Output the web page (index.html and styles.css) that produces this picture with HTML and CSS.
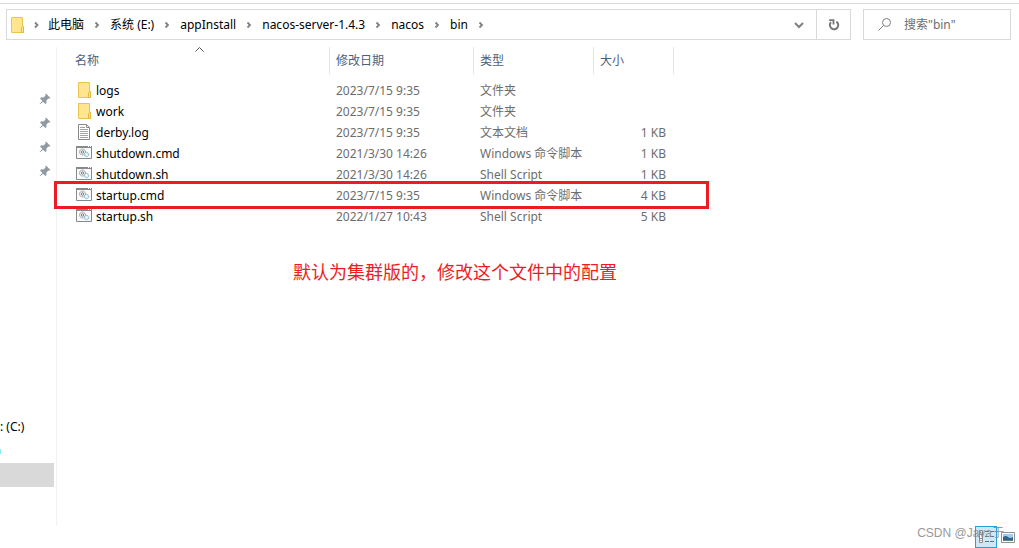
FILE: index.html
```html
<!DOCTYPE html>
<html lang="zh-CN">
<head>
<meta charset="utf-8">
<title>bin</title>
<link rel="stylesheet" href="styles.css">
</head>
<body>
<svg class="defs" aria-hidden="true">
  <symbol id="chevron" viewBox="0 0 8 8"><path d="M2.500 1.500 5 4 2.500 6.500" fill="none" stroke="#808080" stroke-width="1.800"/></symbol>
  <symbol id="folder" viewBox="0 0 16 16">
    <path d="M2.500.5h11v9h1v6h-12z" fill="#ffe590" stroke="#eac54f"/>
    <path d="M12.500 15.500v-5l1-1h1v6z" fill="#ffe590" stroke="#e3b93c"/>
  </symbol>
  <symbol id="text-file" viewBox="0 0 16 16">
    <path d="M2.500.5h8l3 3v12h-11z" fill="#fff" stroke="#8a8a8a"/>
    <path d="M10.500.5v3h3" fill="none" stroke="#8a8a8a"/>
    <path d="M4 3.500h5M4 5.500h8M4 7.500h8M4 9.500h8M4 11.500h8M4 13.500h8" stroke="#a0a4a6"/>
  </symbol>
  <symbol id="script" viewBox="0 0 16 16">
    <path d="M.5 1.500h15v12H.5z" fill="#fafafa" stroke="#858a8d"/>
    <path d="M0 2h16" stroke="#858a8d" stroke-width="2"/>
    <path d="M12 1.500h1M14 1.500h1" stroke="#fff"/>
    <circle cx="6.500" cy="7" r="3" fill="#f0f0f0" stroke="#8d9295" stroke-dasharray="1.500 .6"/>
    <circle cx="6.500" cy="7" r="1.200" fill="#fff" stroke="#777"/>
    <circle cx="10.500" cy="9.500" r="2.200" fill="#d8eefb" stroke="#7fb1cf" stroke-dasharray="1.500 .5"/>
    <circle cx="10.500" cy="9.500" r=".7" fill="#fff"/>
  </symbol>
  <symbol id="pin" viewBox="0 0 12 12">
    <path d="M7 .6 11.400 5l-1.100.8-1-.2-1.900 2 .1 2.300-1.200 1.200L4 8.700.9 11.300.5 10.900l2.900-3.200L1 5.500l1.200-1.200 2.400.1 2-2-.4-1z" fill="#8e9aa3"/>
  </symbol>
</svg>

<header class="toolbar">
  <nav class="address" aria-label="路径">
    <svg class="icon"><use href="#folder"/></svg>
    <ol class="crumbs">
      <li><svg class="sep"><use href="#chevron"/></svg>此电脑</li>
      <li><svg class="sep"><use href="#chevron"/></svg>系统 (E:)</li>
      <li><svg class="sep"><use href="#chevron"/></svg>appInstall</li>
      <li><svg class="sep"><use href="#chevron"/></svg>nacos-server-1.4.3</li>
      <li><svg class="sep"><use href="#chevron"/></svg>nacos</li>
      <li><svg class="sep"><use href="#chevron"/></svg>bin<svg class="sep"><use href="#chevron"/></svg></li>
    </ol>
    <button class="history" type="button" aria-label="以前的位置"><svg width="10" height="8" viewBox="0 0 10 8"><path d="m1 2 4 4 4-4" fill="none" stroke="#808080" stroke-width="2"/></svg></button>
    <button class="refresh" type="button" aria-label="刷新"><svg width="12" height="12" viewBox="0 0 12 12"><path d="M8.400 2.600A4.200 4.200 0 1 1 3 3.200" fill="none" stroke="#777" stroke-width="2"/><path d="M1.200 1.200h4.300v4.300" fill="none" stroke="#777" stroke-width="1.800"/></svg></button>
  </nav>
  <label class="search">
    <svg width="14" height="14" viewBox="0 0 14 14"><circle cx="8.500" cy="4.500" r="4" fill="none" stroke="#7d7d7d"/><path d="M5.500 7.500.5 12.500" stroke="#7d7d7d"/></svg>
    <input type="text" placeholder='搜索"bin"' aria-label="搜索">
  </label>
</header>

<div class="body">
  <aside class="sidebar">
    <ul class="pins">
      <li><svg><use href="#pin"/></svg></li>
      <li><svg><use href="#pin"/></svg></li>
      <li><svg><use href="#pin"/></svg></li>
      <li><svg><use href="#pin"/></svg></li>
    </ul>
    <ul class="drives">
      <li>: (C:)</li>
      <li class="network"></li>
      <li class="selected"></li>
    </ul>
  </aside>
  <main class="content">
    <table class="files">
      <colgroup><col class="col-name"><col class="col-date"><col class="col-type"><col class="col-size"></colgroup>
      <thead>
        <tr>
          <th class="sorted">名称<svg class="sort" width="9" height="5" viewBox="0 0 9 5"><path d="m.5 4.500 4-4 4 4" fill="none" stroke="#555"/></svg></th>
          <th>修改日期</th><th>类型</th><th>大小</th>
        </tr>
      </thead>
      <tbody>
        <tr><td><span class="name"><svg class="icon"><use href="#folder"/></svg>logs</span></td><td>2023/7/15 9:35</td><td>文件夹</td><td></td></tr>
        <tr><td><span class="name"><svg class="icon"><use href="#folder"/></svg>work</span></td><td>2023/7/15 9:35</td><td>文件夹</td><td></td></tr>
        <tr><td><span class="name"><svg class="icon"><use href="#text-file"/></svg>derby.log</span></td><td>2023/7/15 9:35</td><td>文本文档</td><td>1 KB</td></tr>
        <tr><td><span class="name"><svg class="icon"><use href="#script"/></svg>shutdown.cmd</span></td><td>2021/3/30 14:26</td><td>Windows 命令脚本</td><td>1 KB</td></tr>
        <tr><td><span class="name"><svg class="icon"><use href="#script"/></svg>shutdown.sh</span></td><td>2021/3/30 14:26</td><td>Shell Script</td><td>1 KB</td></tr>
        <tr class="marked"><td><span class="name"><svg class="icon"><use href="#script"/></svg>startup.cmd</span></td><td>2023/7/15 9:35</td><td>Windows 命令脚本</td><td>4 KB</td></tr>
        <tr><td><span class="name"><svg class="icon"><use href="#script"/></svg>startup.sh</span></td><td>2022/1/27 10:43</td><td>Shell Script</td><td>5 KB</td></tr>
      </tbody>
    </table>
    <p class="note">默认为集群版的，修改这个文件中的配置</p>
  </main>
</div>

<footer class="status">
  <button class="view active" type="button" aria-label="详细信息"><svg width="20" height="20" viewBox="0 0 20 20"><path d="M3.500 3.500h3v12h-3zM3.500 7.500h3M3.500 11.500h3" fill="#fff" stroke="#8b8b8b"/><path d="M9 4.500h4M14 4.500h4M9 9.500h4M14 9.500h4M9 14.500h4M14 14.500h4" stroke="#647078"/><path d="M4.500 5.500h1" stroke="#4a9b58"/><path d="M4.500 13.500h1" stroke="#b33"/></svg></button>
  <button class="view" type="button" aria-label="大图标"><svg width="14" height="11" viewBox="0 0 14 11"><path d="M.5.5h13v10H.5z" fill="#fff" stroke="#919191"/><path d="M2 2h10v7H2z" fill="#9ccdf2"/><path d="M2 5q3-2 5 0t5 0v4H2z" fill="#35618c"/><path d="M2 8h10v1H2z" fill="#5b8b66"/></svg></button>
  <span class="watermark">CSDN @Java于</span>
</footer>
</body>
</html>
```
FILE: styles.css
```css
*, *::before, *::after { box-sizing: border-box; }

body {
  display: flex;
  flex-direction: column;
  min-height: 100vh;
  margin: 0;
  background: #fff;
  color: #000;
  font: 12px/20px "Noto Sans", "Noto Sans CJK SC", sans-serif;
}

.defs { position: absolute; width: 0; height: 0; }
ul, ol { margin: 0; padding: 0; list-style: none; }
button { padding: 0; border: 0; background: none; }
svg { flex: none; }
.icon { width: 16px; height: 16px; }

.toolbar {
  display: flex;
  gap: 12px;
  margin-top: 3px;
  padding: 5px 8px 0 6px;
  border-top: 1px solid #d9d9d9;
}

.address {
  display: flex;
  flex: 1;
  align-items: center;
  height: 31px;
  padding-left: 2px;
  border: 1px solid #d9d9d9;
}

.crumbs { display: flex; flex: 1; white-space: nowrap; }
.crumbs li { display: flex; align-items: center; }
.sep { width: 26px; height: 8px; }
.crumbs li:first-child .sep { width: 23px; }

.history, .refresh {
  display: flex;
  align-items: center;
  justify-content: center;
  align-self: stretch;
  width: 34px;
}
.refresh { border-left: 1px solid #d9d9d9; }

.search {
  display: flex;
  align-items: center;
  gap: 12px;
  width: 148px;
  padding: 0 14px;
  border: 1px solid #d9d9d9;
}
.search input {
  width: 100%;
  min-width: 0;
  padding: 0;
  border: 0;
  outline: 0;
  background: none;
  font: inherit;
}
.search input::placeholder { color: #6d6d6d; opacity: 1; }

.body { display: flex; flex: 1; margin-top: 7px; }

.sidebar {
  flex: none;
  width: 57px;
  padding-top: 40px;
  border-right: 1px solid #f2f2f2;
}
.sidebar li { display: flex; align-items: center; height: 24px; }
.pins li { justify-content: flex-end; padding-right: 5px; }
.pins svg { width: 12px; height: 12px; }
.drives { margin-top: 232px; }
.drives .network::before {
  width: 1px;
  height: 5px;
  background: #8eeaf0;
  content: "";
}
.drives .selected { margin-right: 2px; background: #d9d9d9; }

.content { flex: 1; }

.files { width: 617px; border-collapse: separate; border-spacing: 0; table-layout: fixed; }
.col-name { width: 273px; }
.col-date { width: 144px; }
.col-type { width: 120px; }
.col-size { width: 80px; }

.files th {
  height: 27px;
  padding: 0 0 0 6px;
  border-right: 1px solid #e5e5e5;
  color: #4c607a;
  font-weight: 400;
  text-align: left;
}
.files th:first-child { padding-left: 18px; }
.sorted { position: relative; }
.sort { position: absolute; top: 0; left: 138px; }

.files tbody::before { display: block; height: 6px; content: ""; }
.files td {
  height: 21px;
  padding: 1px 0 0 6px;
  color: #6d6d6d;
  vertical-align: top;
  white-space: nowrap;
}
.files td:first-child { padding-left: 19px; color: #000; }
.files td:last-child { padding-right: 8px; text-align: right; }
.name { display: flex; align-items: flex-start; gap: 4px; }
.name .icon { margin-top: 1px; }

.marked { position: relative; }
.marked::after {
  position: absolute;
  top: -4px;
  left: -3px;
  width: 655px;
  height: 28px;
  border: 3px solid #ed1c24;
  content: "";
}

.note {
  margin: 32px 0 0 236px;
  color: #ed1c24;
  font-size: 18px;
  line-height: 26px;
}

.status {
  position: relative;
  display: flex;
  align-items: center;
  justify-content: flex-end;
  gap: 4px;
  height: 22px;
  padding-right: 4px;
}
.view { display: flex; }
.view.active { border: 1px solid #26a0da; background: #cce8f7; }
.watermark {
  position: absolute;
  right: 15px;
  bottom: 5px;
  color: #888;
  font-family: "Liberation Sans", "Noto Sans CJK SC", sans-serif;
  opacity: .85;
}
```
